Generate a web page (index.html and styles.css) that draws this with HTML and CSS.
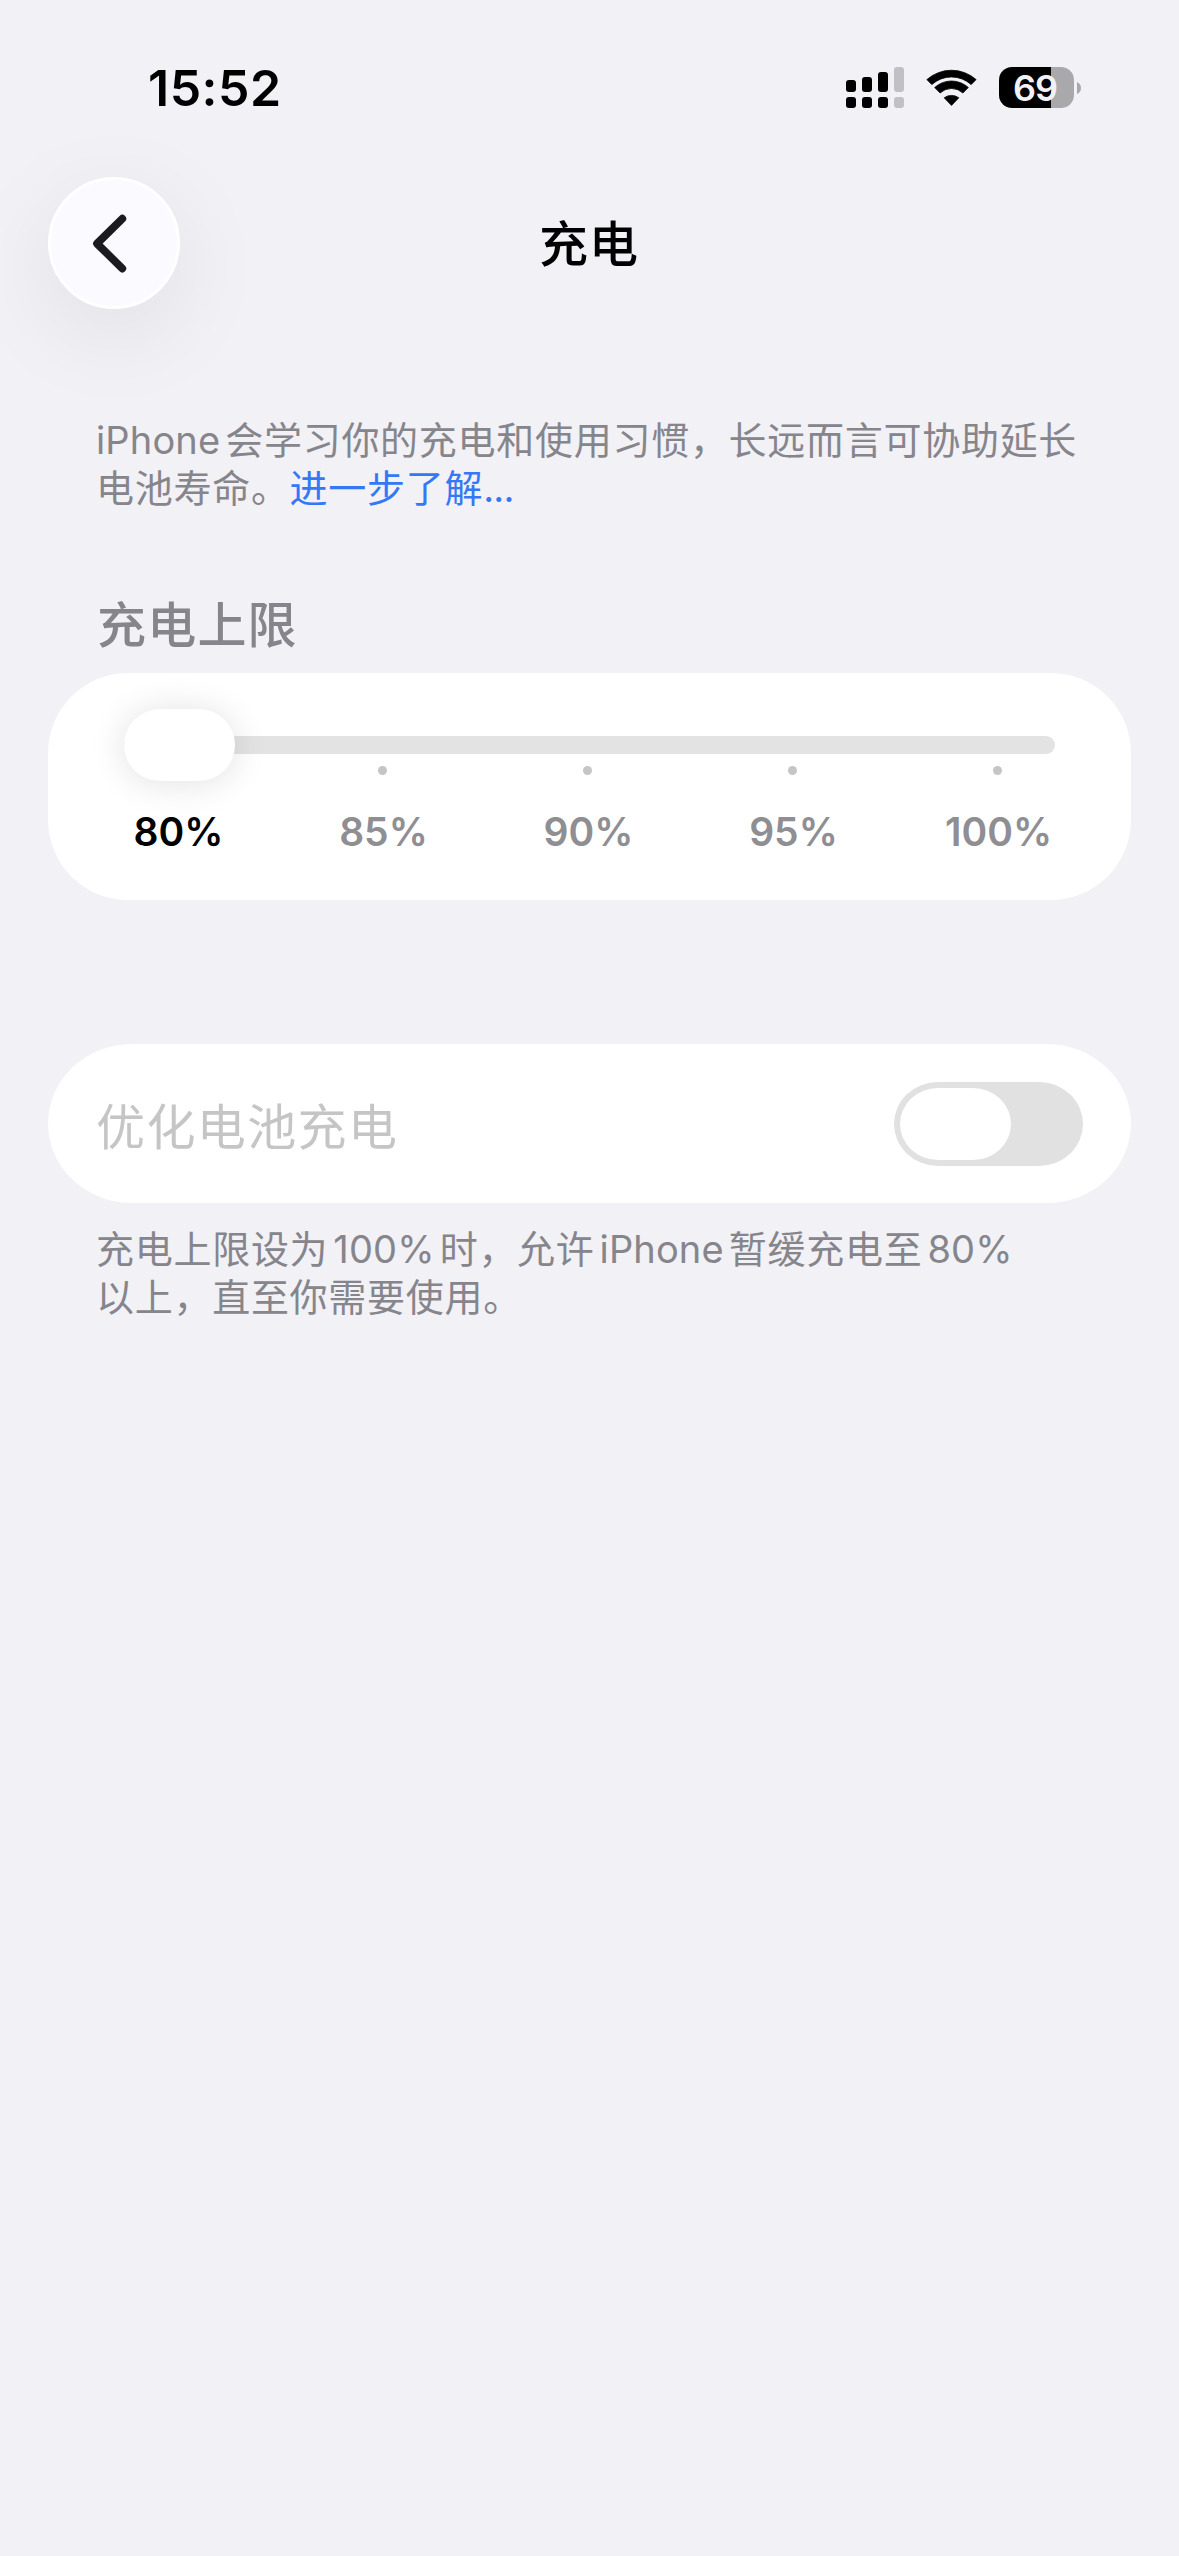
FILE: index.html
```html
<!DOCTYPE html>
<html lang="zh-CN">
<head>
<meta charset="utf-8">
<title>充电</title>
<link rel="stylesheet" href="styles.css">
</head>
<body>
<div class="screen">
  <header class="status-bar">
    <span class="time">15:52</span>
    <div class="indicators">
      <svg class="signal" width="58" height="41" viewBox="0 0 58 41">
        <g fill="#000">
          <rect x="0" y="13" width="10" height="12" rx="3"/>
          <rect x="16" y="10" width="10" height="15" rx="3"/>
          <rect x="32" y="5" width="10" height="20" rx="3"/>
          <rect x="0" y="30" width="10" height="11" rx="3"/>
          <rect x="16" y="30" width="10" height="11" rx="3"/>
          <rect x="32" y="30" width="10" height="11" rx="3"/>
        </g>
        <g fill="#c1c0c5">
          <rect x="48" y="0" width="10" height="25" rx="3"/>
          <rect x="48" y="30" width="10" height="11" rx="3"/>
        </g>
      </svg>
      <svg class="wifi" width="51" height="41" viewBox="0 0 51 41">
        <path d="M.9 12.6A37 37 0 0 1 50.1 12.6L45.2 17.6A29.2 29.2 0 0 0 5.8 17.6Z" stroke="#000" stroke-width=".8" stroke-linejoin="round"/>
        <path d="M8.7 20.5A25 25 0 0 1 42.3 20.5L36.9 26A16.6 16.6 0 0 0 14.1 26Z" stroke="#000" stroke-width=".8" stroke-linejoin="round"/>
        <path d="M18.2 30.8A12.3 12.3 0 0 1 32.8 30.8L25.5 38.4Z" stroke="#000" stroke-width=".8" stroke-linejoin="round"/>
      </svg>
      <div class="battery">
        <div class="battery-body"><span class="battery-level">69</span></div>
        <svg width="4" height="12" viewBox="0 0 4 12"><path d="M0 0Q4 2 4 6T0 12Z" fill="#a9a9ab"/></svg>
      </div>
    </div>
  </header>

  <nav class="nav-bar">
    <button class="back" aria-label="返回">
      <svg width="40" height="64" viewBox="0 0 40 64"><path d="M34.3 7.7L9 32.6L34.3 57.5" fill="none" stroke="#1b1b1f" stroke-width="7.8" stroke-linecap="round" stroke-linejoin="round"/></svg>
    </button>
    <h1 class="title">充电</h1>
  </nav>

  <main class="content">
    <p class="note intro"><span class="latin first">iPhone</span>会学习你的充电和使用习惯，长远而言可协助延长<br>电池寿命。<a class="more">进一步了解<span class="dots">...</span></a></p>

    <h2 class="section-title">充电上限</h2>
    <section class="card limit-card">
      <div class="slider">
        <div class="track"></div>
        <div class="knob"></div>
      </div>
      <div class="stops">
        <span class="stop current">80%</span>
        <span class="stop">85%</span>
        <span class="stop">90%</span>
        <span class="stop">95%</span>
        <span class="stop">100%</span>
      </div>
    </section>

    <section class="card toggle-card">
      <span class="toggle-label">优化电池充电</span>
      <div class="toggle"><div class="toggle-knob"></div></div>
    </section>
    <p class="note footer">充电上限设为<span class="latin">100%</span>时，允许<span class="latin">iPhone</span>暂缓充电至<span class="latin">80%</span><br>以上，直至你需要使用。</p>
  </main>
</div>
</body>
</html>
```

FILE: styles.css
```css
* { box-sizing: border-box; }

body {
  margin: 0;
  background: #f1f1f6;
  font-family: Inter, "Noto Sans CJK SC", sans-serif;
  color: #000;
}

.screen {
  width: 1179px;
  height: 2556px;
  overflow: hidden;
}

.status-bar {
  height: 177px;
  padding: 67px 98px 0 148px;
  display: flex;
  justify-content: space-between;
  align-items: flex-start;
}

.time {
  font-size: 50px;
  line-height: 43px;
  font-weight: 600;
  letter-spacing: 0.5px;
}

.indicators { display: flex; gap: 22px; }
.signal, .wifi { display: block; }
.battery { display: flex; align-items: center; gap: 3px; }

.battery-body {
  width: 75px;
  height: 41px;
  padding-right: 3px;
  border-radius: 13px;
  background: linear-gradient(to right, #000 52px, #a9a9ab 52px);
  text-align: center;
}

.battery-level {
  color: #f1f1f6;
  font-size: 36px;
  line-height: 42px;
  font-weight: 600;
  letter-spacing: -1px;
}

.nav-bar {
  height: 132px;
  padding: 0 48px;
  display: grid;
  grid-template-columns: 132px 1fr 132px;
  align-items: center;
}

.back {
  width: 132px;
  height: 132px;
  padding: 0 13px 0 0;
  display: flex;
  align-items: center;
  justify-content: center;
  border: 3px solid #fff;
  border-radius: 50%;
  background: #fafaff;
  box-shadow: 0 24px 96px rgba(0, 0, 0, 0.08);
}

.title {
  margin: 0;
  padding: 4px 1px 0 0;
  text-align: center;
  font-size: 49px;
  line-height: 60px;
  font-weight: 500;
  letter-spacing: 1px;
}

.content { padding: 107px 48px 0; }

.note {
  margin: 0;
  padding-left: 48px;
  font-size: 38px;
  line-height: 48px;
  letter-spacing: 0.72px;
  color: #86858b;
  white-space: nowrap;
}

.latin { margin: 0 5px; letter-spacing: 0.15px; }
.latin.first { margin-left: 0; }
.more { color: #3478f6; }
.dots { letter-spacing: -0.8px; }

.section-title {
  margin: 0;
  padding: 79px 0 13px 49px;
  font-size: 49px;
  line-height: 69px;
  font-weight: 500;
  letter-spacing: 1.2px;
  color: #86858b;
}

.card { background: #fff; }

.limit-card {
  height: 227px;
  padding-top: 36px;
  border-radius: 80px;
}

.slider {
  height: 72px;
  padding: 0 76px;
  display: grid;
  align-items: center;
}

.track, .knob { grid-area: 1 / 1; }

.track {
  height: 18px;
  border-radius: 9px;
  background: #e3e3e3;
}

.knob {
  width: 111px;
  height: 72px;
  border-radius: 36px;
  background: #fff;
  box-shadow: 0 2px 36px rgba(0, 0, 0, 0.12);
}

/* The tick dots sit in the lower part of the slider's row. */
.stops {
  margin-top: -15px;
  padding-left: 27px;
  display: grid;
  grid-template-columns: repeat(5, 205px);
}

.stop {
  display: flex;
  flex-direction: column;
  align-items: center;
  gap: 33px;
  color: #8f8e93;
  font-size: 39px;
  line-height: 48px;
  font-weight: 600;
  text-indent: 2px;
}

.stop::before {
  content: "";
  width: 9px;
  height: 9px;
  border-radius: 50%;
  background: #c5c5c5;
}

.stop.current { color: #000; }
.stop.current::before { visibility: hidden; }

.toggle-card {
  height: 159px;
  margin-top: 144px;
  padding: 0 48px;
  display: flex;
  align-items: center;
  justify-content: space-between;
  border-radius: 84px / 79.5px;
}

.toggle-label {
  padding-top: 8px;
  color: #c5c5c5;
  font-size: 49px;
  line-height: 66px;
  letter-spacing: 1.4px;
}

.toggle {
  width: 189px;
  height: 84px;
  padding: 6px;
  border-radius: 44px / 42px;
  background: #e1e1e1;
}

.toggle-knob {
  width: 111px;
  height: 72px;
  border-radius: 38px / 36px;
  background: #fff;
}

.footer { padding-top: 22px; }
```
